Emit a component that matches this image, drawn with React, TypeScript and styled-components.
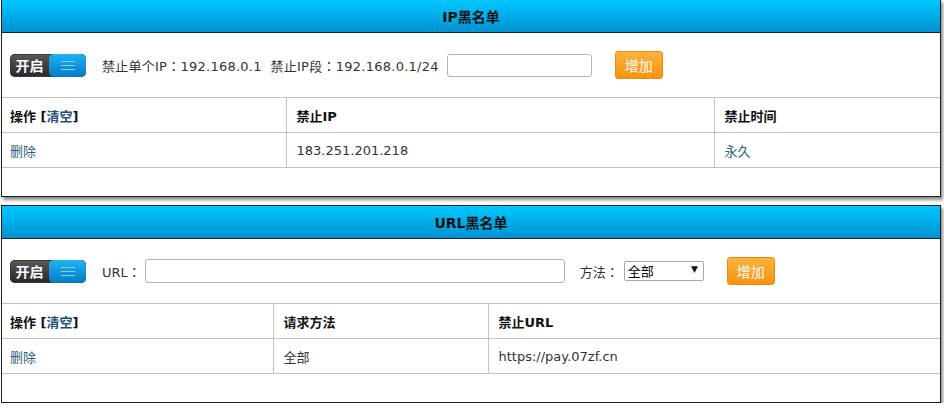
import React from "react";
import styled, { createGlobalStyle } from "styled-components";

const Global = createGlobalStyle`
  html, body { margin: 0; padding: 0; background: #fff; }
  body {
    font-family: "DejaVu Sans", "Noto Sans CJK SC", sans-serif;
    font-size: 13px;
    color: #333;
  }
  * { box-sizing: border-box; }
`;

const Page = styled.div`
  display: flex;
  flex-direction: column;
  gap: 8px;
  padding: 0 3px 0 1px;
  margin-top: -1px;
`;

const Panel = styled.section`
  border: 1px solid #1e1e1e;
  background: #fff;
  box-shadow: 2px 3px 3px rgba(0, 0, 0, 0.45);
  padding-bottom: 28px;
`;

const Header = styled.div`
  height: 33px;
  border-bottom: 1px solid #1e1e1e;
  background: linear-gradient(#00c8ff, #0092d2);
  display: flex;
  align-items: center;
  justify-content: center;
  font-weight: bold;
  font-size: 14px;
  color: #111;
`;

const Toolbar = styled.div`
  height: 64px;
  display: flex;
  align-items: center;
  padding-left: 8px;
  white-space: pre;
`;

const Switch = styled.div`
  width: 76px;
  height: 23px;
  border-radius: 5px;
  display: flex;
  background: linear-gradient(#5a5a5a, #262626);
  box-shadow: 0 0 0 1px #3a3a3a inset;
  overflow: hidden;
  margin-right: 16px;
  flex: none;
`;

const SwitchLabel = styled.span`
  width: 39px;
  display: flex;
  align-items: center;
  justify-content: center;
  color: #fff;
  font-weight: bold;
  font-size: 14px;
`;

const Knob = styled.span`
  flex: 1;
  border-radius: 5px;
  background: linear-gradient(#1cb4f4, #067ac8);
  display: flex;
  align-items: center;
  justify-content: center;
`;

const Label = styled.span<{ $gap?: number; $track?: number }>`
  color: #333;
  margin-right: ${(p) => p.$gap ?? 0}px;
  letter-spacing: ${(p) => p.$track ?? 0}px;
`;

const Colon = styled.span`
  font-family: "Noto Sans CJK JP", sans-serif;
`;

const TextInput = styled.input<{ $w: number; $h: number; $gap: number }>`
  width: ${(p) => p.$w}px;
  height: ${(p) => p.$h}px;
  border: 1px solid #b4b4b4;
  border-radius: 3px;
  margin-right: ${(p) => p.$gap}px;
  padding: 0 4px;
  font: inherit;
  outline: none;
`;

const SelectWrap = styled.div`
  position: relative;
  width: 80px;
  height: 20px;
  margin-right: 23px;
`;

const Select = styled.select`
  appearance: none;
  width: 100%;
  height: 100%;
  border: 1px solid #a9a9a9;
  border-radius: 2px;
  background: #fff;
  font-family: "DejaVu Sans", "Noto Sans CJK SC", sans-serif;
  font-size: 13px;
  color: #000;
  padding: 0 3px;
  outline: none;
`;

const Arrow = styled.span`
  position: absolute;
  right: 6px;
  top: 3px;
  font-size: 9px;
  color: #111;
  pointer-events: none;
`;

const AddButton = styled.button`
  width: 48px;
  height: 28px;
  border: 1px solid #e98c10;
  border-radius: 3px;
  background: linear-gradient(#fdb23e, #f6930f);
  color: #fff;
  font-family: "DejaVu Sans", "Noto Sans CJK SC", sans-serif;
  font-size: 14px;
  padding: 0;
  cursor: pointer;
`;

const Table = styled.table`
  width: 100%;
  border-collapse: collapse;
  table-layout: fixed;
`;

const Col = styled.col<{ $w?: number }>`
  width: ${(p) => (p.$w ? `${p.$w}px` : "auto")};
`;

const Th = styled.th`
  height: 35px;
  border: 1px solid #c3c3c3;
  text-align: left;
  padding: 0 9px 0 10px;
  font-weight: bold;
  color: #111;
  &:first-child { border-left: none; padding-left: 8px; }
  &:last-child { border-right: none; }
`;

const Td = styled.td<{ $tone?: "link" | "plain" }>`
  height: 35px;
  border: 1px solid #c3c3c3;
  padding: 0 9px 0 10px;
  color: ${(p) => (p.$tone === "link" ? "#2e5f80" : "#333")};
  &:first-child { border-left: none; padding-left: 8px; }
  &:last-child { border-right: none; }
`;

const Clear = styled.span`
  color: #1f4f7d;
`;

const MenuIcon = () => (
  <svg width="14" height="9" viewBox="0 0 14 9">
    <g stroke="#7fd2ff" strokeWidth="1">
      <line x1="0" y1="0.5" x2="14" y2="0.5" />
      <line x1="0" y1="4.5" x2="14" y2="4.5" />
      <line x1="0" y1="8.5" x2="14" y2="8.5" />
    </g>
  </svg>
);

const Toggle = () => (
  <Switch>
    <SwitchLabel>开启</SwitchLabel>
    <Knob>
      <MenuIcon />
    </Knob>
  </Switch>
);

export default function App() {
  return (
    <>
      <Global />
      <Page>
        <Panel>
          <Header>IP黑名单</Header>
          <Toolbar>
            <Toggle />
            <Label $gap={8} $track={0.25}>
              禁止单个IP<Colon>：</Colon>192.168.0.1  禁止IP段<Colon>：</Colon>192.168.0.1/24
            </Label>
            <TextInput $w={145} $h={23} $gap={23} />
            <AddButton>增加</AddButton>
          </Toolbar>
          <Table>
            <colgroup>
              <Col $w={284} />
              <Col $w={428} />
              <Col />
            </colgroup>
            <thead>
              <tr>
                <Th>
                  操作 [<Clear>清空</Clear>]
                </Th>
                <Th>禁止IP</Th>
                <Th>禁止时间</Th>
              </tr>
            </thead>
            <tbody>
              <tr>
                <Td $tone="link">删除</Td>
                <Td>183.251.201.218</Td>
                <Td $tone="link">永久</Td>
              </tr>
            </tbody>
          </Table>
        </Panel>
        <Panel>
          <Header>URL黑名单</Header>
          <Toolbar>
            <Toggle />
            <Label $gap={4}>
              URL<Colon>：</Colon>
            </Label>
            <TextInput $w={420} $h={24} $gap={15} />
            <Label $gap={5}>
              方法<Colon>：</Colon>
            </Label>
            <SelectWrap>
              <Select defaultValue="all">
                <option value="all">全部</option>
                <option value="get">GET</option>
                <option value="post">POST</option>
              </Select>
              <Arrow>▼</Arrow>
            </SelectWrap>
            <AddButton>增加</AddButton>
          </Toolbar>
          <Table>
            <colgroup>
              <Col $w={271} />
              <Col $w={215} />
              <Col />
            </colgroup>
            <thead>
              <tr>
                <Th>
                  操作 [<Clear>清空</Clear>]
                </Th>
                <Th>请求方法</Th>
                <Th>禁止URL</Th>
              </tr>
            </thead>
            <tbody>
              <tr>
                <Td $tone="link">删除</Td>
                <Td>全部</Td>
                <Td>https://pay.07zf.cn</Td>
              </tr>
            </tbody>
          </Table>
        </Panel>
      </Page>
    </>
  );
}
